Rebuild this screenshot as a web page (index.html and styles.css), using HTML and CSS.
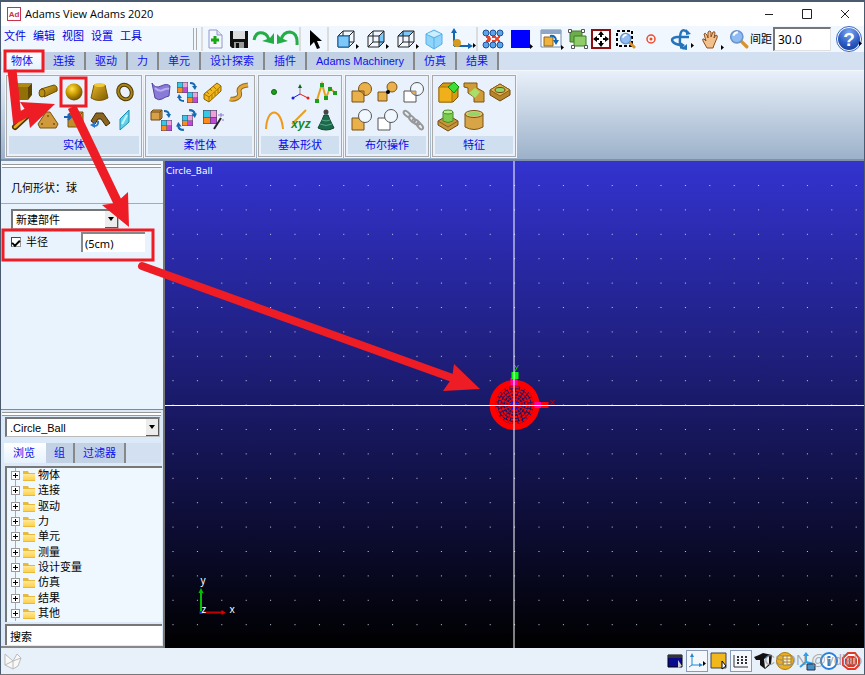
FILE: index.html
```html
<!DOCTYPE html>
<html lang="zh-CN">
<head>
    <meta charset="utf-8">
    <title>Adams View Adams 2020</title>
    <link rel="stylesheet" href="styles.css">
</head>
<body>
    <!-- shared icon parts -->
    <svg class="defs" aria-hidden="true">
        <defs>
            <linearGradient id="gold" x1="0" y1="0" x2="1" y2="1">
                <stop offset="0" stop-color="#e8b828"/>
                <stop offset="1" stop-color="#7a5800"/>
            </linearGradient>
            <linearGradient id="folder-fill" x1="0" y1="0" x2="0" y2="1">
                <stop offset="0" stop-color="#ffe99a"/>
                <stop offset="1" stop-color="#ffd04a"/>
            </linearGradient>
            <radialGradient id="ball" cx=".38" cy=".32" r=".7">
                <stop offset="0" stop-color="#ffe24a"/>
                <stop offset=".5" stop-color="#c99a00"/>
                <stop offset="1" stop-color="#6b4d00"/>
            </radialGradient>
            <radialGradient id="help-fill" cx=".5" cy=".2" r=".9">
                <stop offset="0" stop-color="#7fa8ee"/>
                <stop offset=".6" stop-color="#2a5bc4"/>
                <stop offset="1" stop-color="#173a94"/>
            </radialGradient>
            <symbol id="box-wire" viewBox="0 0 18 18">
                <path d="M1 6h11v11H1zM6 1h11v11H6zM1 6l5-5M12 6l5-5M12 17l5-5M1 17l5-5" fill="none" stroke="#222"/>
            </symbol>
            <symbol id="rubik" viewBox="0 0 11 11">
                <rect width="11" height="11" fill="#446"/>
                <path d="M.5.5h5v5h-5z" fill="#35c9e8"/><path d="M6 .5h4.500v5H6z" fill="#f0a0d8"/>
                <path d="M.5 6h5v4.500h-5z" fill="#ff8a1c"/><path d="M6 6h4.500v4.500H6z" fill="#c04ad8"/>
            </symbol>
            <symbol id="swirl" viewBox="0 0 8 8">
                <path d="M1 1q5 0 5 4" fill="none" stroke="#1668b0" stroke-width="1.8"/>
                <path d="M3 4h5L6 8z" fill="#1668b0"/>
            </symbol>
            <symbol id="lens" viewBox="0 0 18 18">
                <path d="M10 10l6 6" stroke="#d8942c" stroke-width="3" stroke-linecap="round"/>
                <circle cx="7" cy="7" r="5.500" fill="#8fbcf2" stroke="#6b93cc" stroke-width="1.400"/>
                <path d="M4 6q1-3 4-3" fill="none" stroke="#fff" stroke-width="1.800"/>
            </symbol>
            <symbol id="folder" viewBox="0 0 12 11">
                <path d="M0 1h5l1 2h6v8H0z" fill="#e9b93c"/>
                <path d="M0 4h12v6H0z" fill="url(#folder-fill)"/>
            </symbol>
            <symbol id="more" viewBox="0 0 3 5"><path d="M0 0l3 2.500L0 5z" fill="#000"/></symbol>
        </defs>
    </svg>

    <header class="titlebar">
        <svg class="logo" viewBox="0 0 14 14"><rect x=".5" y=".5" width="13" height="13" fill="#fff" stroke="#c8324a"/><text x="7" y="10" text-anchor="middle" class="logo-text">Ad</text></svg>
        <h1>Adams View Adams 2020</h1>
        <div class="window-buttons">
            <button aria-label="最小化"><svg width="10" height="10"><path d="M1 5.500h8" stroke="#222"/></svg></button>
            <button aria-label="最大化"><svg width="10" height="10"><path d="M.5.5h9v9h-9z" fill="none" stroke="#222"/></svg></button>
            <button aria-label="关闭"><svg width="10" height="10"><path d="M1 1l8 8M9 1L1 9" stroke="#222"/></svg></button>
        </div>
    </header>

    <div class="toolbar">
        <nav class="menu">
            <a href="#">文件</a>
            <a href="#">编辑</a>
            <a href="#">视图</a>
            <a href="#">设置</a>
            <a href="#">工具</a>
        </nav>
        <div class="tools">
            <button class="tool" aria-label="新建"><svg viewBox="0 0 24 24"><path d="M6 3h8l5 5v13H6z" fill="#f5f7ff" stroke="#8f97cf"/><path d="M14 3v5h5" fill="#dfe3f7" stroke="#8f97cf"/><path d="M12 9v8M8 13h8" stroke="#18a818" stroke-width="3"/></svg></button>
            <button class="tool" aria-label="保存"><svg viewBox="0 0 24 24"><path d="M3 4h18v17H5l-2-2z" fill="#111"/><path d="M6 4h12v8H6z" fill="#ddd"/><path d="M7 15h10v6H7z" fill="#999"/><path d="M9 16h3v5H9z" fill="#111"/></svg></button>
            <button class="tool" aria-label="重做"><svg viewBox="0 0 24 24"><path d="M3 13Q5 4 12 6q6 2 6 9" fill="none" stroke="#23ad45" stroke-width="3"/><path d="M11 14l12 3V6l-4 5z" fill="#23ad45"/></svg></button>
            <button class="tool" aria-label="撤销"><svg viewBox="0 0 24 24"><path d="M22 18Q23 6 15 5q-7 0-9 8" fill="none" stroke="#23ad45" stroke-width="3"/><path d="M13 14L2 17V7l4 4z" fill="#23ad45"/></svg></button>
        </div>
        <div class="tools">
            <button class="tool" aria-label="选择"><svg viewBox="0 0 24 24"><path d="M7 3v16l4-4 3 7 3-1-3-7h5z" fill="#000"/></svg></button>
        </div>
        <div class="tools views">
            <button class="tool wide" aria-label="前视图"><svg viewBox="0 0 30 24"><use href="#box-wire" x="5" y="3" width="18" height="18"/><path d="M6 9h11v11H6z" fill="#7cc8fa" stroke="#1a5a90"/><use href="#more" x="24" y="17" width="3" height="5"/></svg></button>
            <button class="tool wide" aria-label="右视图"><svg viewBox="0 0 30 24"><path d="M17 9l5-5v11l-5 5z" fill="#7cc8fa"/><use href="#box-wire" x="5" y="3" width="18" height="18"/><use href="#more" x="24" y="17" width="3" height="5"/></svg></button>
            <button class="tool wide" aria-label="顶视图"><svg viewBox="0 0 30 24"><path d="M6 9l5-5h11l-5 5z" fill="#7cc8fa"/><use href="#box-wire" x="5" y="3" width="18" height="18"/><use href="#more" x="24" y="17" width="3" height="5"/></svg></button>
            <button class="tool" aria-label="等轴视图"><svg viewBox="0 0 24 24"><path d="M12 3l8 4v10l-8 5-8-5V7z" fill="#8fd4fb" stroke="#55b0e6"/><path d="M4 7l8 4v11M20 7l-8 4" fill="none" stroke="#55b0e6"/><path d="M12 4l7 3-7 3-7-3z" fill="#cdeeff"/></svg></button>
            <button class="tool wide" aria-label="坐标系"><svg viewBox="0 0 30 24"><path d="M8 19V4M8 19h16" stroke="#1266b4" stroke-width="2"/><path d="M5 6l3-5 3 5zM22 16l5 3-5 3z" fill="#1266b4"/><circle cx="11" cy="16" r="4" fill="#d89a1c"/><use href="#more" x="27" y="16" width="3" height="5"/></svg></button>
        </div>
        <div class="tools">
            <button class="tool" aria-label="栅格"><svg viewBox="0 0 24 24"><path d="M5 10h14M5 14h14" stroke="#e8442a" stroke-width="2" stroke-dasharray="4 2"/><g fill="#5aa4ea" stroke="#1d4f92"><circle cx="5" cy="6" r="3"/><circle cx="12" cy="6" r="3"/><circle cx="19" cy="6" r="3"/><circle cx="5" cy="18" r="3"/><circle cx="12" cy="18" r="3"/><circle cx="19" cy="18" r="3"/></g><circle cx="8" cy="12" r="2" fill="#e8442a"/><circle cx="16" cy="12" r="2" fill="#e8442a"/></svg></button>
            <button class="tool wide" aria-label="背景色"><svg viewBox="0 0 30 24"><path d="M6 3h19v18H6z" fill="#0000fe"/><use href="#more" x="25" y="17" width="3" height="5"/></svg></button>
            <button class="tool wide" aria-label="渲染"><svg viewBox="0 0 30 24"><path d="M6 3h20v17H6z" fill="#fff" stroke="#6f87ad"/><path d="M6 3h20v4H6z" fill="#8fa6c8"/><path d="M9 10h9v9H9z" fill="#f0b23a" stroke="#8a6420"/><path d="M15 9q6-1 6 5" fill="none" stroke="#1266b4" stroke-width="2"/><path d="M18 13h6l-3 5z" fill="#1266b4"/><use href="#more" x="26" y="18" width="3" height="5"/></svg></button>
            <button class="tool" aria-label="全部显示"><svg viewBox="0 0 24 24"><path d="M5 4h12v11H5z" fill="#6cae4c" stroke="#3c7a28"/><path d="M9 9h12v10H9z" fill="#8fcc6a" stroke="#3c7a28"/><g fill="#fff" stroke="#555"><path d="M3.500 2.500h3v3h-3zM16.500 2.500h3v3h-3zM6.500 18.500h3v3h-3zM19.500 18.500h3v3h-3z"/></g></svg></button>
            <button class="tool" aria-label="适合窗口"><svg viewBox="0 0 24 24"><path d="M3 3h18v18H3z" fill="#fff" stroke="#8f1010" stroke-width="2"/><path d="M12 4l3 4h-2v2h-2V8H9zM12 20l3-4h-2v-2h-2v2H9zM4 12l4-3v2h2v2H8v2zM20 12l-4-3v2h-2v2h2v2z" fill="#000"/></svg></button>
            <button class="tool" aria-label="窗口缩放"><svg viewBox="0 0 24 24"><path d="M4 4h15v15H4z" fill="none" stroke="#000" stroke-width="2" stroke-dasharray="3 2"/><use href="#lens" x="6" y="5" width="17" height="17"/></svg></button>
            <button class="tool" aria-label="中心"><svg viewBox="0 0 24 24"><circle cx="14" cy="12" r="4" fill="none" stroke="#f04a28" stroke-width="1.500"/><circle cx="14" cy="12" r="1.500" fill="#f04a28"/></svg></button>
        </div>
        <div class="tools navigate">
            <button class="tool wide" aria-label="旋转"><svg viewBox="0 0 30 24"><path d="M22 6Q15-1 14 10t4 11M23 10H11q-7 1-4 5 3 3 10 3" fill="none" stroke="#2474bc" stroke-width="2.500"/><path d="M20 8V2l5 5zM15 22l6-5v6zM14 15l5 3-5 4z" fill="#2474bc"/><use href="#more" x="25" y="16" width="3" height="5"/></svg></button>
            <button class="tool wide" aria-label="平移"><svg viewBox="0 0 30 24"><path d="M11 21l-4-7q-1-3 1-2l2 2-2-7q1-2 3 1l1 3V5q2-2 3 0v5l2-5q2-1 2 1l-1 5 2-3q2 0 1 3l-3 7-1 3z" fill="#f3c08c" stroke="#8a4f20"/><use href="#more" x="25" y="18" width="3" height="5"/></svg></button>
            <button class="tool" aria-label="缩放"><svg viewBox="0 0 24 24"><use href="#lens" x="3" y="2" width="20" height="20"/></svg></button>
        </div>
        <label class="spacing">间距 <input type="text" value="30.0"></label>
        <button class="help" aria-label="帮助"><svg viewBox="0 0 26 26"><circle cx="13" cy="13" r="12.500" fill="#fff" stroke="#3a63c0"/><circle cx="13" cy="13" r="11" fill="url(#help-fill)"/><text x="13" y="20" text-anchor="middle" class="help-mark">?</text><use href="#more" x="23" y="15" width="3" height="5"/></svg></button>
    </div>

    <nav class="tabs">
        <button class="tab active">物体</button>
        <button class="tab">连接</button>
        <button class="tab">驱动</button>
        <button class="tab">力</button>
        <button class="tab">单元</button>
        <button class="tab">设计探索</button>
        <button class="tab">插件</button>
        <button class="tab">Adams Machinery</button>
        <button class="tab">仿真</button>
        <button class="tab">结果</button>
    </nav>

    <div class="ribbon">
        <section class="group">
            <div class="icons five">
                <button aria-label="立方体"><svg viewBox="0 0 26 26"><path d="M3 8l5-4h15l-4 4z" fill="#b08a10"/><path d="M3 8h16v13H3z" fill="#927008"/><path d="M19 8l4-4v12l-4 5z" fill="#5e4500"/></svg></button>
                <button aria-label="圆柱"><svg viewBox="0 0 26 26"><path d="M6 10l13-4q4 1 3 6L9 18z" fill="url(#gold)" stroke="#6b4d00"/><ellipse cx="7" cy="14" rx="3" ry="4" fill="#b89018" stroke="#6b4d00"/></svg></button>
                <button aria-label="球"><svg viewBox="0 0 26 26"><circle cx="13" cy="13" r="8.500" fill="url(#ball)"/></svg></button>
                <button aria-label="锥台"><svg viewBox="0 0 26 26"><path d="M7 6L4 19q8 5 17 0L18 6z" fill="url(#gold)" stroke="#7a5800"/><ellipse cx="12.500" cy="6" rx="5.500" ry="2" fill="#f0c838"/></svg></button>
                <button aria-label="圆环"><svg viewBox="0 0 26 26"><ellipse cx="12" cy="13" rx="6.500" ry="7.500" fill="none" stroke="#4e3900" stroke-width="4" transform="rotate(-30 12 13)"/><ellipse cx="12" cy="13" rx="6.500" ry="7.500" fill="none" stroke="#a98418" stroke-width="2" transform="rotate(-30 12 13)"/></svg></button>
                <button aria-label="连杆"><svg viewBox="0 0 26 26"><path d="M6 20L20 7" stroke="#4a3600" stroke-width="6" stroke-linecap="round"/><path d="M6 20L20 7" stroke="#e8a820" stroke-width="3" stroke-linecap="round"/></svg></button>
                <button aria-label="平板"><svg viewBox="0 0 26 26"><path d="M11 5h4l8 12-2 4H5l-2-4z" fill="#d09a3c" stroke="#7a5410"/><g fill="#7a5410"><circle cx="13" cy="9" r="1"/><circle cx="7" cy="17" r="1"/><circle cx="19" cy="17" r="1"/></g></svg></button>
                <button aria-label="拉伸"><svg viewBox="0 0 26 26"><path d="M7 8l3-3h12v12l-3 3H7z" fill="#c28e28" stroke="#7a5410"/><path d="M7 8h12v12M19 8l3-3" fill="none" stroke="#7a5410"/><path d="M3 10h6M7 7l3 3-3 3" fill="none" stroke="#1a62b8" stroke-width="2"/></svg></button>
                <button aria-label="旋转体"><svg viewBox="0 0 26 26"><path d="M4 14l5-8h7l7 10-4 3-5-7h-3l-3 5z" fill="#8a6420" stroke="#3e2c06"/><path d="M11 14q1 5-4 5" fill="none" stroke="#2a7ad0" stroke-width="2"/><path d="M3 18l5-3v6z" fill="#2a7ad0"/></svg></button>
                <button aria-label="平面"><svg viewBox="0 0 26 26"><path d="M7 12l9-9v12l-9 8z" fill="#62d2ea" stroke="#1c8cb0"/><path d="M9 17l5-9" stroke="#c2f6ff" stroke-width="2"/></svg></button>
            </div>
            <h2>实体</h2>
        </section>
        <section class="group">
            <div class="icons four">
                <button aria-label="柔性曲面"><svg viewBox="0 0 26 26"><path d="M4 4q3 6 9 3t9 0l-1 10q-4 1-7 3t-7-1z" fill="#8a7ad8" stroke="#5444a4"/><path d="M7 9q4 4 8 2t6-1" fill="none" stroke="#b9aef2" stroke-width="2"/></svg></button>
                <button aria-label="刚柔转换"><svg viewBox="0 0 26 26"><use href="#rubik" x="3" y="3" width="11" height="11"/><use href="#rubik" x="13" y="13" width="11" height="11"/><use href="#swirl" x="15" y="3" width="8" height="8"/><use href="#swirl" x="3" y="15" width="8" height="8" transform="rotate(180 7 19)"/></svg></button>
                <button aria-label="柔性梁"><svg viewBox="0 0 26 26"><path d="M4 15L17 4l4 3v5L9 23l-5-3z" fill="#f0b81c" stroke="#8a6000"/><path d="M4 15l5 3L21 7M9 18v5M7 13l2 2M10 10l2 2M13 7l3 3M12 16v4M15 13v4M18 10v4" fill="none" stroke="#a87400"/></svg></button>
                <button aria-label="柔性索"><svg viewBox="0 0 26 26"><path d="M4 20q3 1 7-1 4-2 2-7 0-5 9-6" fill="none" stroke="#9c6c14" stroke-width="5"/><path d="M4 20q3 1 7-1 4-2 2-7 0-5 9-6" fill="none" stroke="#e0a840" stroke-width="3"/></svg></button>
                <button aria-label="刚体转柔体"><svg viewBox="0 0 26 26"><path d="M3 5l2-2h9v8l-2 2H3z" fill="#d8a048" stroke="#6e4a10"/><path d="M3 5h9v8M12 5l2-2" fill="none" stroke="#6e4a10"/><use href="#rubik" x="13" y="13" width="11" height="11"/><use href="#swirl" x="15" y="3" width="8" height="8"/></svg></button>
                <button aria-label="柔体替换"><svg viewBox="0 0 26 26"><use href="#rubik" x="8" y="8" width="11" height="11"/><use href="#swirl" x="14" y="2" width="9" height="9"/><use href="#swirl" x="3" y="14" width="9" height="9" transform="rotate(180 7 19)"/></svg></button>
                <button aria-label="柔体向导"><svg viewBox="0 0 26 26"><use href="#rubik" x="3" y="3" width="14" height="14"/><path d="M14 22L21 11" stroke="#222" stroke-width="2"/><path d="M21 6v4M18 8h6M22 13h2" stroke="#8d7ad0"/></svg></button>
            </div>
            <h2>柔性体</h2>
        </section>
        <section class="group">
            <div class="icons">
                <button aria-label="点"><svg viewBox="0 0 26 26"><circle cx="13" cy="13" r="2.500" fill="#1ca01c" stroke="#0a680a"/></svg></button>
                <button aria-label="标记点"><svg viewBox="0 0 26 26"><path d="M13 15V9" stroke="#888"/><path d="M13 15l-7 4" stroke="#1a1ae8"/><path d="M13 15l8 4" stroke="#e81a1a"/><path d="M11 9l2-4 2 4z" fill="#0a680a"/><circle cx="6" cy="19" r="1.500" fill="#1a1ae8"/><circle cx="21" cy="19" r="1.500" fill="#e81a1a"/></svg></button>
                <button aria-label="折线"><svg viewBox="0 0 26 26"><path d="M4 21L9 5l4 14 4-10 5 5" fill="none" stroke="#e8a01c" stroke-width="2"/><path d="M2 20h4v4H2zM7 4h4v4H7zM11 17h4v4h-4zM15 8h4v4h-4zM20 12h4v4h-4z" fill="#1ca01c"/></svg></button>
                <button aria-label="弧"><svg viewBox="0 0 26 26"><path d="M5 22C6 0 20 0 22 22" fill="none" stroke="#f0981c" stroke-width="2"/></svg></button>
                <button aria-label="样条"><svg viewBox="0 0 26 26"><path d="M5 17L19 3" stroke="#e8a01c" stroke-width="2"/><text x="14" y="21" text-anchor="middle" class="xyz">xyz</text></svg></button>
                <button aria-label="质量点"><svg viewBox="0 0 26 26"><circle cx="13" cy="5" r="2.500" fill="#444"/><path d="M11 8h4l2 5 4 8q-8 4-16 0l4-8z" fill="#1c6a4c" stroke="#0d4630"/><path d="M9 13q4 2 8 0M7 17q6 3 12 0" fill="none" stroke="#58a888"/></svg></button>
            </div>
            <h2>基本形状</h2>
        </section>
        <section class="group">
            <div class="icons">
                <button aria-label="布尔并"><svg viewBox="0 0 26 26"><circle cx="17" cy="10" r="6.500" fill="#eab04a" stroke="#77531a"/><path d="M4 12h12v11H4z" fill="#eab04a" stroke="#77531a"/><path d="M11 12a6.500 6.500 0 0 1 5 4" fill="none" stroke="#77531a"/></svg></button>
                <button aria-label="合并"><svg viewBox="0 0 26 26"><path d="M9 17l8-8" stroke="#000"/><circle cx="18" cy="8" r="5" fill="#eab04a" stroke="#77531a"/><path d="M4 13h9v9H4z" fill="#eab04a" stroke="#77531a"/><circle cx="14" cy="13" r="2" fill="#000"/></svg></button>
                <button aria-label="布尔交"><svg viewBox="0 0 26 26"><path d="M4 12h12v11H4z" fill="#fff" stroke="#555"/><circle cx="17" cy="10" r="6.500" fill="#f1f7ff" stroke="#555"/><path d="M11 12h5v4q-4 0-5-4z" fill="#eab04a" stroke="#888"/></svg></button>
                <button aria-label="布尔减"><svg viewBox="0 0 26 26"><path d="M4 11h12v12H4z" fill="#eab04a" stroke="#77531a"/><circle cx="17" cy="9" r="6.500" fill="#f1f7ff" stroke="#555"/></svg></button>
                <button aria-label="拆分"><svg viewBox="0 0 26 26"><path d="M4 11h12v12H4z" fill="#fff" stroke="#555"/><circle cx="17" cy="9" r="6.500" fill="#f1f7ff" stroke="#555"/></svg></button>
                <button aria-label="链"><svg viewBox="0 0 26 26"><g fill="none" stroke="#999" stroke-width="2"><ellipse cx="7" cy="7" rx="4" ry="2" transform="rotate(40 7 7)"/><ellipse cx="12" cy="12" rx="4" ry="2" transform="rotate(50 12 12)"/><ellipse cx="16" cy="15" rx="4" ry="2" transform="rotate(35 16 15)"/><ellipse cx="20" cy="19" rx="4" ry="2" transform="rotate(50 20 19)"/></g></svg></button>
            </div>
            <h2>布尔操作</h2>
        </section>
        <section class="group">
            <div class="icons">
                <button aria-label="倒角"><svg viewBox="0 0 26 26"><path d="M4 8l4-4h11l4 5v9l-5 5H4z" fill="#d89a10" stroke="#7a5400"/><path d="M4 8h13v15H4z" fill="#f0b01c" stroke="#a87400"/><path d="M13 8l6-5 5 5-5 6z" fill="#3adf3a" stroke="#0a8a0a"/></svg></button>
                <button aria-label="圆角"><svg viewBox="0 0 26 26"><path d="M3 4h13v5l7 4v10H13v-5l-6-4V9L3 8z" fill="#cf9c38" stroke="#7a5410"/><path d="M8 14l6-5 5 4-5 6z" fill="#a6e06a"/></svg></button>
                <button aria-label="孔"><svg viewBox="0 0 26 26"><path d="M3 11l10-6 10 6v5l-10 6-10-6z" fill="#b8842a" stroke="#6e4a10"/><path d="M3 11l10-6 10 6-10 6z" fill="#e0b050" stroke="#8a6018"/><ellipse cx="13" cy="11" rx="5" ry="2.500" fill="#8ed86a" stroke="#6e4a10"/></svg></button>
                <button aria-label="凸台"><svg viewBox="0 0 26 26"><path d="M3 14l10-6 10 6v4l-10 6-10-6z" fill="#c8943a" stroke="#6e4a10"/><path d="M3 14l10 6 10-6" fill="none" stroke="#8a6018"/><path d="M8 5v9q5 3 10 0V5z" fill="#7ccc50" stroke="#4a8a2a"/><ellipse cx="13" cy="5" rx="5" ry="2" fill="#b4f08c" stroke="#4a8a2a"/></svg></button>
                <button aria-label="抽壳"><svg viewBox="0 0 26 26"><path d="M4 7v13q9 5 18 0V7z" fill="#d8a448" stroke="#7a5410"/><ellipse cx="13" cy="7" rx="9" ry="3.500" fill="#e8c070" stroke="#7a5410"/><ellipse cx="13" cy="7" rx="6.500" ry="2" fill="#8ed86a"/></svg></button>
            </div>
            <h2>特征</h2>
        </section>
    </div>

    <main class="workspace">
        <aside class="side">
            <section class="properties">
                <div class="grip"></div>
                <h3>几何形状：球</h3>
                <div class="fields">
                    <div class="combo part">
                        <select aria-label="部件"><option>新建部件</option></select>
                        <span class="drop"></span>
                    </div>
                    <div class="field">
                        <label><input type="checkbox" checked> 半径</label>
                        <input type="text" class="value" aria-label="半径值" value="(5cm)">
                    </div>
                </div>
            </section>
            <section class="browser">
                <div class="grip"></div>
                <div class="combo model">
                    <select aria-label="模型"><option>.Circle_Ball</option></select>
                    <span class="drop"></span>
                </div>
                <nav class="tabs browse-tabs">
                    <button class="tab active">浏览</button>
                    <button class="tab">组</button>
                    <button class="tab">过滤器</button>
                </nav>
                <ul class="tree">
                    <li><button class="expand" aria-label="展开"></button><svg><use href="#folder"/></svg>物体</li>
                    <li><button class="expand" aria-label="展开"></button><svg><use href="#folder"/></svg>连接</li>
                    <li><button class="expand" aria-label="展开"></button><svg><use href="#folder"/></svg>驱动</li>
                    <li><button class="expand" aria-label="展开"></button><svg><use href="#folder"/></svg>力</li>
                    <li><button class="expand" aria-label="展开"></button><svg><use href="#folder"/></svg>单元</li>
                    <li><button class="expand" aria-label="展开"></button><svg><use href="#folder"/></svg>测量</li>
                    <li><button class="expand" aria-label="展开"></button><svg><use href="#folder"/></svg>设计变量</li>
                    <li><button class="expand" aria-label="展开"></button><svg><use href="#folder"/></svg>仿真</li>
                    <li><button class="expand" aria-label="展开"></button><svg><use href="#folder"/></svg>结果</li>
                    <li><button class="expand" aria-label="展开"></button><svg><use href="#folder"/></svg>其他</li>
                </ul>
                <input type="text" class="search" aria-label="搜索" value="搜索">
            </section>
        </aside>

        <div class="viewport">
            <svg class="scene" viewBox="0 0 700 487" preserveAspectRatio="xMidYMid slice">
                <defs>
                    <pattern id="grid" x="8" y="24" width="24.400" height="24.400" patternUnits="userSpaceOnUse">
                        <rect width="1" height="1" fill="#d0d0e8"/>
                    </pattern>
                </defs>
                <rect y="20" width="700" height="467" fill="url(#grid)"/>
                <!-- wireframe ball -->
                <circle cx="350" cy="244" r="22" fill="none" stroke="#f00" stroke-width="6"/>
                <g fill="none" stroke="#f00">
                    <circle cx="350" cy="244" r="18" stroke-width="2" stroke-dasharray="4 1"/>
                    <circle cx="350" cy="244" r="15" stroke-width="2" stroke-dasharray="3 1"/>
                    <circle cx="350" cy="244" r="12" stroke-width="2" stroke-dasharray="3 1"/>
                    <circle cx="350" cy="244" r="9"/>
                    <circle cx="350" cy="244" r="6"/>
                    <path d="M350 222v44M328 244h44M334 228l32 32M366 228l-32 32M342 223l16 42M358 223l-16 42M329 236l42 16M329 252l42-16"/>
                </g>
                <path d="M370 241h7v6h-7zM346 217h7v7h-7z" fill="#f0a"/>
                <path d="M377 241h7v6h-7z" fill="#f00"/>
                <path d="M347 211h7v7h-7z" fill="#0f0"/>
                <path d="M350 204l2 3M354 204l-4 7" stroke="#0c0"/>
                <path d="M386 239l4 5M390 239l-4 5" stroke="#c00"/>
                <path d="M347 241h6v6h-6z" fill="none" stroke="#11f" stroke-width="2" stroke-dasharray="2 2"/>
                <path d="M0 244.500h700M349.500 0v487" stroke="#fff"/>
                <!-- view triad -->
                <path d="M36.500 451v-22" stroke="#00c000" stroke-width="2"/>
                <path d="M34 432l2.500-5 2.500 5z" fill="#00c000"/>
                <path d="M36 451.500h22" stroke="#c00000" stroke-width="2"/>
                <path d="M57 449l4 2.500-4 2.500z" fill="#e00000"/>
                <path d="M35 450h3v3h-3z" fill="#22f"/>
                <text x="36" y="423">y</text>
                <text x="65" y="452">x</text>
                <text x="37" y="452">z</text>
            </svg>
            <span class="model-name">Circle_Ball</span>
        </div>
    </main>

    <footer class="status">
        <svg class="cube-logo" viewBox="0 0 18 18"><path d="M1 2l8 7v8l-8-4zM9 9l8-3-3 8-5 3M9 9l4-7 4 4M1 13l8-4" fill="#f8f8f8" stroke="#bbb"/></svg>
        <div class="status-icons">
            <button aria-label="背景"><svg viewBox="0 0 20 20"><path d="M3 4h14v12H3z" fill="#0a0a90" stroke="#000"/><path d="M3 4h14v3H3z" fill="#333"/><path d="M13 9v8l4-2z" fill="#ccc"/></svg></button>
            <button aria-label="坐标" class="pressed"><svg viewBox="0 0 20 20"><path d="M5 5v9h8M5 14l-3 2" fill="none" stroke="#1e88d0"/><path d="M3 6l2-4 2 4zM12 12l4 2-4 2z" fill="#1e88d0"/><use href="#more" x="16" y="10" width="3" height="5"/></svg></button>
            <button aria-label="颜色"><svg viewBox="0 0 20 20"><path d="M2 2h15v15H2z" fill="#f0b81c" stroke="#444"/><path d="M13 10v8l4-3z" fill="#fff" stroke="#000"/></svg></button>
            <button aria-label="网格" class="pressed"><svg viewBox="0 0 20 20"><path d="M3 4v12h14" fill="none" stroke="#333"/><path d="M6 6h12M6 9h12M6 12h12" stroke="#333" stroke-width="2" stroke-dasharray="2 2"/></svg></button>
            <button aria-label="渲染"><svg viewBox="0 0 20 20"><path d="M1 6l5-2 4-2 9 2-1 9-6 5-5-4V9H3z" fill="#111"/><path d="M11 8l5-3v8l-4 4z" fill="#eee"/></svg></button>
            <button aria-label="实体"><svg viewBox="0 0 20 20"><circle cx="10" cy="10" r="8.500" fill="#e8b020" stroke="#b07c10"/><path d="M8 5h8v9H8z" fill="#fff3c0" stroke="#b07c10"/><path d="M8 8h8M8 11h8" stroke="#b07c10"/></svg></button>
            <button aria-label="图标"><svg viewBox="0 0 20 20"><path d="M9 2v9M9 11l8 2M9 11l-6 5" fill="none" stroke="#28a0e8" stroke-width="2"/><path d="M6 5l3-4 3 4z" fill="#28a0e8"/><path d="M10 13h8v6h-8z" fill="#4a90c8" stroke="#234"/></svg></button>
            <button aria-label="信息"><svg viewBox="0 0 20 20"><circle cx="10" cy="10" r="8" fill="#fff" stroke="#2a80d8" stroke-width="2"/><path d="M10 5v2M10 8v7" stroke="#2a80d8" stroke-width="3"/></svg></button>
            <button aria-label="停止"><svg viewBox="0 0 20 20"><path d="M7 2h7l4 5v7l-4 4H7l-5-4V7z" fill="#fff" stroke="#e03828" stroke-width="2"/><path d="M7 5h6l3 3v5l-3 3H7l-3-3V8z" fill="#e03828"/><path d="M7 7v6M10 7v6M13 7v6" stroke="#fff"/></svg></button>
        </div>
    </footer>

    <span class="watermark">CSDN @vdlab</span>

    <!-- red step markers -->
    <svg class="markers" width="865" height="675" viewBox="0 0 865 675" aria-hidden="true">
        <g fill="none" stroke="#ee1c24">
            <path d="M5 51h38v20H5zM61 78h25v28H61zM3 230h150v30H3z" stroke-width="3"/>
            <path d="M12 70l5 48 15-8" stroke-width="9"/>
            <path d="M72 107l46 96" stroke-width="9"/>
            <path d="M142 266l316 114" stroke-width="8" stroke-linecap="round"/>
        </g>
        <g fill="#ee1c24">
            <path d="M55 104L20 102l8 12 2 14z"/>
            <path d="M129 227l-27-22 14-2 12-11z"/>
            <path d="M480 389l-26-25-2 14-9 13z"/>
        </g>
    </svg>
</body>
</html>
```
FILE: styles.css
```css
* {
    box-sizing: border-box;
}
body {
    margin: 0;
    position: relative;
    display: flex;
    flex-direction: column;
    height: 100vh;
    min-height: 600px;
    border: 1px solid #4a5b70;
    border-top-width: 2px;
    border-bottom-color: #777;
    background-color: #e8f0fa;
    font-family: "Liberation Sans", "Noto Sans CJK SC", sans-serif;
    font-size: 11px;
    line-height: 16px;
    color: #000;
}
h1, h2, h3, ul {
    margin: 0;
    padding: 0;
    font-size: 11px;
    font-weight: normal;
}
button {
    padding: 0;
    border: 0;
    background: none;
    font: inherit;
    color: inherit;
}
svg {
    display: block;
}
input, select {
    font: inherit;
    color: inherit;
    border-radius: 0;
}
.defs {
    position: absolute;
    width: 0;
    height: 0;
}

/* title bar */
.titlebar {
    display: flex;
    align-items: center;
    gap: 4px;
    height: 24px;
    flex: none;
    padding-left: 6px;
    background-color: #fff;
}
.titlebar h1 {
    flex: 1;
    font-family: "Open Sans", "Noto Sans", sans-serif;
}
.logo {
    width: 14px;
    height: 14px;
}
.logo-text {
    font-size: 8px;
    font-weight: bold;
    fill: #c8324a;
}
.window-buttons {
    display: flex;
}
.window-buttons button {
    width: 38px;
    height: 24px;
    display: grid;
    place-items: center;
}

/* toolbar */
.toolbar {
    display: flex;
    align-items: center;
    height: 26px;
    flex: none;
    padding-right: 2px;
    background-color: #f0f7ff;
}
.menu {
    display: flex;
    gap: 7px;
    width: 196px;
    height: 22px;
    padding-left: 3px;
    border-right: 4px double #aaa;
}
.menu a {
    color: #0000e0;
    text-decoration: none;
}
.tools {
    display: flex;
    padding-left: 2px;
    border-left: 2px solid #dcdcdc;
}
.menu + .tools {
    margin-left: 4px;
    padding-left: 0;
}
.views {
    padding-left: 3px;
}
.views + .tools {
    padding-left: 3px;
}
.tools.navigate {
    padding-left: 3px;
    border-color: transparent;
}
.tool {
    width: 24px;
    height: 24px;
}
.wide {
    width: 30px;
}
.tool svg {
    width: 100%;
    height: 24px;
}
.spacing {
    display: flex;
    align-items: center;
    gap: 1px;
    white-space: nowrap;
}
.spacing input {
    width: 58px;
    height: 24px;
    padding: 0 3px;
    border: 1px solid #e0e0e0;
    border-top: 2px solid #777;
    border-left: 2px solid #777;
    background-color: #fff;
    font-family: "Noto Sans", sans-serif;
    font-size: 12px;
}
.help {
    width: 26px;
    height: 26px;
    margin-left: auto;
}
.help-mark {
    font-size: 19px;
    font-weight: bold;
    fill: #fff;
}

/* tabs */
.tabs {
    display: flex;
    height: 18px;
    flex: none;
    padding-left: 1px;
    background-color: #d2e0f1;
}
.tab {
    padding: 0 9px;
    border-right: 2px solid #888;
    background-color: #c2d2e4;
    color: #1010f0;
    font-size: 11px;
    white-space: nowrap;
}
.tab.active {
    border-color: transparent;
    background-image: linear-gradient(#fff, #e6f1fe);
}

/* ribbon */
.ribbon {
    display: flex;
    align-items: flex-start;
    gap: 3px;
    height: 91px;
    flex: none;
    padding: 4px 5px;
    border-top: 1px solid #f4f8fd;
    border-bottom: 2px solid #8090a8;
    background-image: linear-gradient(#e8f0f9, #9cb1ca);
}
.group {
    padding: 2px;
    border: 1px solid #aaa;
    outline: 1px solid #f2f6fb;
    background-color: #e9f2fc;
}
.icons {
    display: grid;
    grid-template-columns: repeat(3, 26px);
    grid-auto-rows: 28px;
    height: 58px;
}
.icons.four {
    grid-template-columns: repeat(4, 26px);
}
.icons.five {
    grid-template-columns: repeat(5, 26px);
}
.icons svg {
    width: 26px;
    height: 26px;
}
.xyz {
    font-size: 12px;
    font-style: italic;
    font-weight: bold;
    fill: #168a28;
}
.group h2 {
    height: 18px;
    line-height: 18px;
    background-color: #d0dff0;
    color: #0808e8;
    text-align: center;
}

/* side panels */
.workspace {
    display: flex;
    flex: 1;
    min-height: 0;
}
.side {
    display: flex;
    flex-direction: column;
    width: 164px;
    flex: none;
    border-right: 2px solid #777;
    background-color: #e9f3fe;
}
.grip {
    height: 4px;
    margin: 3px 2px 0 1px;
    border-top: 1px solid #999;
    border-bottom: 1px solid #999;
    background-color: #fff;
}
.properties {
    flex: 1;
    border-bottom: 1px solid #888;
}
.properties h3 {
    padding: 12px 10px 7px;
    border-bottom: 1px solid #aaa;
}
.fields {
    padding: 5px 18px 0 10px;
}
.combo {
    position: relative;
    height: 20px;
}
.combo select {
    width: 100%;
    height: 100%;
    padding: 0 3px;
    border: 1px solid #bbb;
    border-top: 2px solid #777;
    border-left: 2px solid #777;
    background-color: #fff;
    appearance: none;
}
.drop {
    position: absolute;
    top: 2px;
    right: 1px;
    bottom: 1px;
    width: 13px;
    border-right: 1px solid #555;
    border-bottom: 1px solid #555;
    background-color: #ececec;
    pointer-events: none;
}
.drop::after {
    content: "";
    position: absolute;
    top: 6px;
    left: 3px;
    border: 3px solid transparent;
    border-top: 4px solid #000;
}
.part {
    width: 108px;
}
.field {
    display: flex;
    align-items: center;
    justify-content: space-between;
    padding-top: 3px;
}
.field label {
    display: flex;
    align-items: center;
    gap: 5px;
}
.field input[type="checkbox"] {
    appearance: none;
    width: 10px;
    height: 10px;
    margin: 0;
    border: 1px solid #999;
    border-top-color: #444;
    border-left-color: #444;
    background-color: #fff;
    display: grid;
    place-items: center;
}
.field input:checked::after {
    content: "";
    width: 6px;
    height: 3px;
    border: solid #000;
    border-width: 0 0 2px 2px;
    transform: rotate(-45deg);
}
.value {
    width: 64px;
    height: 20px;
    padding: 0 2px;
    border: 0;
    border-top: 2px solid #888;
    border-left: 2px solid #888;
    background-color: #fff;
    font-family: "Noto Sans", sans-serif;
}

/* model browser */
.browser {
    display: flex;
    flex-direction: column;
    height: 238px;
    border-bottom: 2px solid #888;
    background-color: #dce9f8;
}
.browser .grip {
    margin-top: 2px;
    margin-bottom: 1px;
}
.model {
    margin: 0 3px 0 4px;
}
.browse-tabs {
    height: 20px;
    margin: 6px 2px 3px 3px;
    padding: 0;
}
.browse-tabs .tab {
    padding: 0 8px;
}
.browse-tabs .active {
    padding: 0 9px;
}
.tree {
    flex: 1;
    display: flex;
    flex-direction: column;
    margin: 0 1px 0 4px;
    padding: 0 0 1px 4px;
    border-top: 2px solid #777;
    border-left: 2px solid #777;
    background-color: #eff7ff;
    list-style: none;
}
.tree li {
    flex: 1;
    display: flex;
    align-items: center;
    gap: 3px;
    background: linear-gradient(#aaa, #aaa) 4px 0 / 1px 100% no-repeat;
    line-height: 15px;
}
.tree svg {
    width: 12px;
    height: 11px;
}
.expand {
    width: 9px;
    height: 9px;
    border: 1px solid #999;
    background:
        linear-gradient(#000, #000) center / 5px 1px no-repeat,
        linear-gradient(#000, #000) center / 1px 5px no-repeat,
        #fff;
}
.search {
    height: 21px;
    margin: 2px 1px 1px 4px;
    padding: 0 3px;
    border: 0;
    border-top: 2px solid #777;
    border-left: 2px solid #777;
    background-color: #fff;
}

/* 3d view */
.viewport {
    position: relative;
    flex: 1;
    min-width: 0;
    overflow: hidden;
    background-image: linear-gradient(#3333d0, #000);
}
.scene {
    width: 100%;
    height: 100%;
}
.scene text {
    font-family: "Noto Sans", sans-serif;
    font-size: 10px;
    fill: #fff;
}
.model-name {
    position: absolute;
    top: 2px;
    left: 1px;
    font-family: "DejaVu Sans", sans-serif;
    font-size: 9px;
    color: #fff;
}

/* status bar */
.status {
    display: flex;
    align-items: center;
    justify-content: space-between;
    height: 26px;
    flex: none;
    padding: 0 3px;
    background-color: #e8f0fa;
}
.cube-logo {
    width: 18px;
    height: 18px;
}
.status-icons {
    display: flex;
    gap: 2px;
}
.status-icons svg {
    width: 20px;
    height: 20px;
}
.pressed {
    outline: 1px solid #8a9bb5;
    background-color: #f4f8fd;
}

/* overlays */
.watermark {
    position: absolute;
    right: 2px;
    bottom: 6px;
    font-size: 15px;
    color: rgba(140, 140, 140, 0.7);
    pointer-events: none;
}
.markers {
    position: absolute;
    top: -2px;
    left: -1px;
    pointer-events: none;
}
```
